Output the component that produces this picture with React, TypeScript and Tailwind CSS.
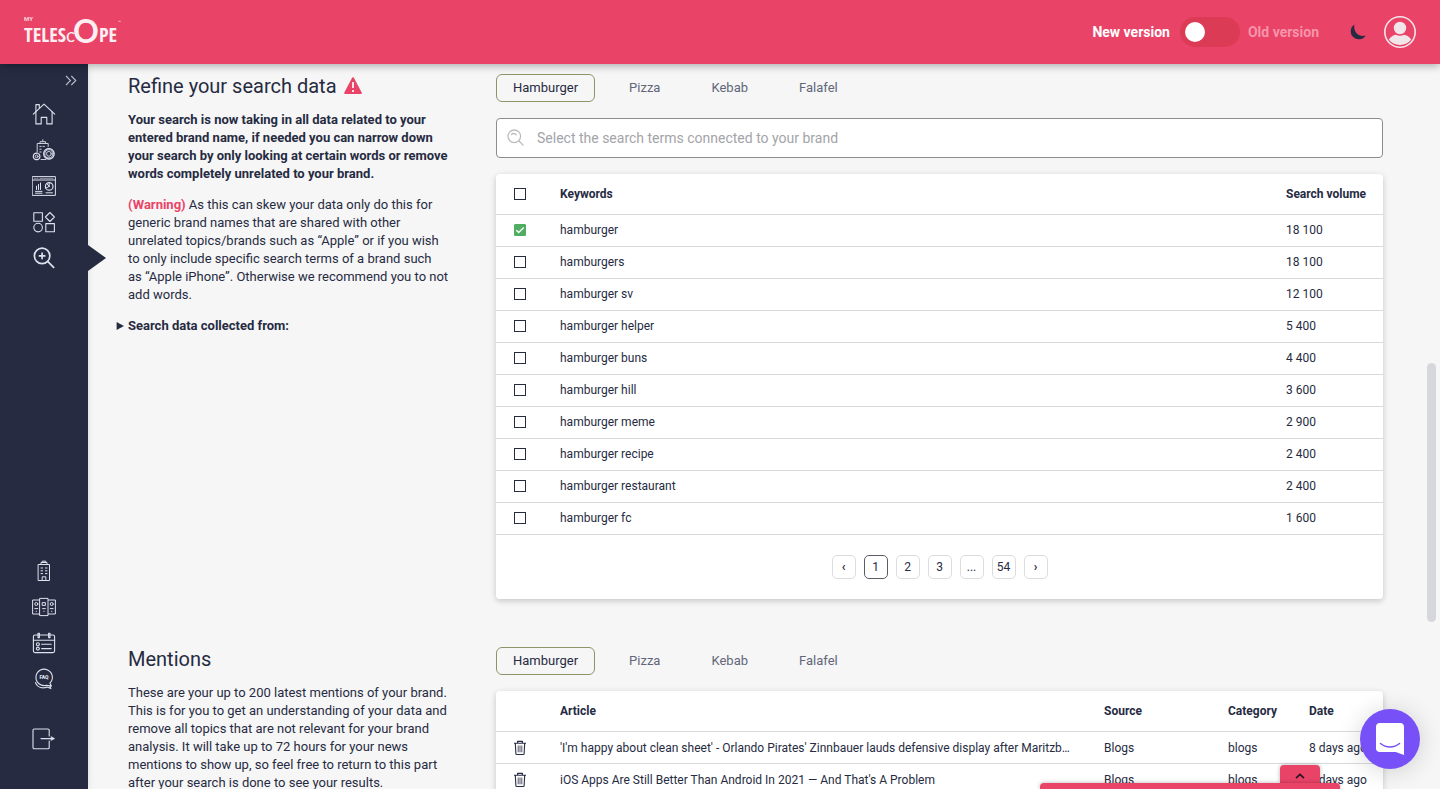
import React from "react";

const keywords = [
  { term: "hamburger", volume: "18 100", selected: true },
  { term: "hamburgers", volume: "18 100" },
  { term: "hamburger sv", volume: "12 100" },
  { term: "hamburger helper", volume: "5 400" },
  { term: "hamburger buns", volume: "4 400" },
  { term: "hamburger hill", volume: "3 600" },
  { term: "hamburger meme", volume: "2 900" },
  { term: "hamburger recipe", volume: "2 400" },
  { term: "hamburger restaurant", volume: "2 400" },
  { term: "hamburger fc", volume: "1 600" },
];

const mentions = [
  {
    article: "'I'm happy about clean sheet' - Orlando Pirates' Zinnbauer lauds defensive display after Maritzb…",
    source: "Blogs",
    category: "blogs",
    date: "8 days ago",
  },
  {
    article: "iOS Apps Are Still Better Than Android In 2021 — And That's A Problem",
    source: "Blogs",
    category: "blogs",
    date: "8 days ago",
  },
];

const brands = ["Hamburger", "Pizza", "Kebab", "Falafel"];

function Icon({ children, width = 1 }: { children: React.ReactNode; width?: number }) {
  return (
    <svg
      viewBox="0 0 24 24"
      className="size-6"
      fill="none"
      stroke="currentColor"
      strokeWidth={width}
      strokeLinecap="round"
      strokeLinejoin="round"
      aria-hidden="true"
    >
      {children}
    </svg>
  );
}

const HomeIcon = () => (
  <Icon width={1.1}>
    <path d="M1.3 12.2 12 2.2l10.7 10" />
    <path d="M3.9 9.8v12.1h5.3v-6.5h5.6v6.5h5.3V9.8" />
    <path d="M3.9 9.4V2.6h3.4v3.6" />
  </Icon>
);

const BrandSettingsIcon = () => (
  <Icon width={0.9}>
    <path d="M5.2 14V5.5h11v3M8 5.3V3.7h5.6v1.6M10.8 3.5V1.7" />
    <path d="M7.8 8.4h1.4M11 8.4h1.4M7.8 11.2h1.4M7.8 14h1.4M9 21.5h5" />
    <circle cx="16.9" cy="15.8" r="5.2" strokeWidth="1.3" strokeDasharray="2.7 .55" />
    <circle cx="16.9" cy="15.8" r="4.1" />
    <circle cx="16.9" cy="15.8" r="2.4" />
    <circle cx="4.6" cy="18.4" r="3.3" strokeWidth="1.2" strokeDasharray="1.8 .5" />
    <circle cx="4.6" cy="18.4" r="1.4" />
  </Icon>
);

const DashboardIcon = () => (
  <Icon>
    <path d="M.6 2.6h22.8v18.8H.6zM.6 6h22.8" />
    <path d="M2.5 4.3h1M5 4.3h1M8 4.3h13" strokeWidth=".6" />
    <path d="M4.5 15.5v-3.3M6.5 15.5v-5M8.5 15.5V9M3.5 17.4h6.5M3.5 19.2h6.5M14 18.8h6.5" />
    <circle cx="17.2" cy="12.4" r="3.8" strokeWidth="1.2" />
    <path d="M17.2 12.4 14.8 9.6M17.2 12.4l-3.4 1.8M17.2 12.4V9.2" />
  </Icon>
);

const ShapesIcon = () => (
  <Icon width={1.1}>
    <path d="M1.8 2.8h8.6v8.4H1.8zM13.8 13.6h8.6v8.2h-8.6z" />
    <path d="m17.9 2.5 4.5 4.5-4.5 4.5L13.4 7z" />
    <circle cx="6.1" cy="17.6" r="4.3" />
  </Icon>
);

const SearchPlusIcon = () => (
  <Icon width={1.7}>
    <circle cx="10.1" cy="9.9" r="7.7" />
    <path d="m15.9 15.7 5.7 5.7M10.1 7.2v5.4M7.4 9.9h5.4" />
  </Icon>
);

const OfficeIcon = () => (
  <Icon width={1}>
    <path d="M6.5 5.5h11v16h-11zM9 5.3V3.5h6v1.8M10.2 3.3V2.2h3.6v1.1" />
    <path d="M9 9h1.6M13.4 9H15M9 11.8h1.6M13.4 11.8H15M9 14.6h1.6M13.4 14.6H15M10.2 21.4v-3.6h3.6v3.6" />
  </Icon>
);

const BuildingsIcon = () => (
  <Icon width={1}>
    <path d="M8 3.4h8v17.2H8zM7.7 5H.6v14h7.1M16.3 5h7.1v14h-7.1" />
    <circle cx="4.3" cy="9" r="1.5" />
    <path d="M10.6 7.6h2.8v2.8h-2.8z" />
    <circle cx="19.7" cy="9" r="1.5" />
    <path d="M2.8 13.6h3M10.6 13.6h2.8M18.2 13.6h3M4.3 16.2v.3M12 16.2v.3M19.7 16.2v.3" />
  </Icon>
);

const CalendarIcon = () => (
  <Icon width={1.1}>
    <rect x="1.4" y="4" width="21.2" height="17.6" rx="1.6" />
    <path d="M1.4 9.2h21.2M6 2.2h1.4v4.4H6zM16.6 2.2H18v4.4h-1.4z" />
    <circle cx="5.9" cy="13.3" r="1.5" />
    <circle cx="5.9" cy="17.6" r="1.5" />
    <path d="M9.6 13.3h9.6M9.6 17.6h9.6" />
  </Icon>
);

const FaqIcon = () => (
  <Icon width={1.1}>
    <path d="M17.9 16.2a8.2 8.2 0 1 0-3.4 2l4.9.9z" />
    <path d="M3.500 15.500c1 3.500 4.500 5.600 8.300 5.300 1.200 0 2.300-.4 3.200-.9l3.900 1.700-1-2.400" />
    <text
      x="12"
      y="12.3"
      textAnchor="middle"
      fill="currentColor"
      strokeWidth="0"
      fontSize="5"
      fontWeight="900"
      fontFamily="Roboto, sans-serif"
    >
      FAQ
    </text>
  </Icon>
);

const LogoutIcon = () => (
  <Icon width={1.1}>
    <path d="M17.2 9V3.3c0-.8-.5-1.3-1.3-1.3H2.3C1.5 2 1 2.500 1 3.300v17.200c0 .8.5 1.300 1.300 1.300h13.600c.8 0 1.300-.5 1.300-1.300V14" />
    <path d="M9 11.600h12" />
    <path d="m19.200 9.600 3.600 2-3.600 2z" fill="currentColor" strokeWidth=".4" />
  </Icon>
);

const TrashIcon = () => (
  <svg viewBox="0 0 14 16" className="h-4 w-3.5" fill="none" stroke="currentColor" strokeWidth="1.1" aria-hidden="true">
    <path d="M1 3.300h12M4.600 3V1.400h4.800V3M2.300 3.500l.6 10.200c0 .5.4.8.9.8h6.400c.5 0 .9-.3.9-.8l.6-10.200" />
    <path d="M5.200 5.500v6.800M7 5.500v6.800M8.800 5.500v6.800" strokeWidth=".8" />
  </svg>
);

function Logo() {
  return (
    <svg viewBox="0 0 104 32" className="h-8 w-[104px] overflow-visible" fill="#fdeef2" role="img" aria-label="My Telescope">
      <text x="0" y="5" fontSize="6" fontWeight="700" fontFamily="Roboto, sans-serif" opacity=".85">MY</text>
      <text x="0" y="26" fontSize="20" fontFamily="'Liberation Sans Narrow', 'Open Sans Condensed', Roboto, sans-serif">TELES</text>
      <text x="42" y="26" fontSize="19" fontFamily="Lato, sans-serif">c</text>
      <text x="49" y="27" fontSize="32" fontWeight="700" fontFamily="Lato, sans-serif">O</text>
      <text x="75" y="26" fontSize="20" fontFamily="'Liberation Sans Narrow', 'Open Sans Condensed', Roboto, sans-serif">PE</text>
      <text x="94" y="8" fontSize="5" fontFamily="Roboto, sans-serif">™</text>
    </svg>
  );
}

function Header() {
  return (
    <header className="relative z-20 flex h-16 shrink-0 items-center justify-between bg-[#ea4368] px-6 shadow-[0_2px_8px_rgba(0,0,0,0.3)]">
      <a href="#home" className="block">
        <Logo />
      </a>
      <div className="flex items-center">
        <label className="flex cursor-pointer items-center text-sm font-bold text-white">
          New version
          <input type="checkbox" role="switch" className="peer sr-only" />
          <span className="mr-2 ml-2.5 flex h-[30px] w-[60px] items-center rounded-full bg-[#db3b55] px-[5px]">
            <span className="size-5 rounded-full bg-white" />
          </span>
          <span className="text-[#f694ab]">Old version</span>
        </label>
        <button type="button" aria-label="Dark mode" className="ml-[31px] text-[#262b42]">
          <svg viewBox="0 0 16 16" className="size-4" fill="currentColor" aria-hidden="true">
            <path d="M4.400.6A8 8 0 1 0 15.600 11.400C9.600 13.600 3 8.200 4.400.6z" />
          </svg>
        </button>
        <button type="button" aria-label="Account" className="ml-[18px] text-[#f1e6ea]">
          <svg viewBox="0 0 32 32" className="size-8" aria-hidden="true">
            <circle cx="16" cy="16" r="15.200" fill="none" stroke="currentColor" strokeWidth="1.600" />
            <circle cx="16" cy="12" r="6.200" fill="currentColor" />
            <path d="M4.800 23.600C7 20.200 10 18.900 12 18.800c2.400 1.200 5.600 1.200 8 0 2.200.2 5.200 1.600 7.200 4.800C24.800 27 20.800 29 16 29S7.200 27 4.800 23.600z" fill="currentColor" />
          </svg>
        </button>
      </div>
    </header>
  );
}

function NavItem({ label, active, children }: { label: string; active?: boolean; children: React.ReactNode }) {
  return (
    <a href={"#" + label.toLowerCase().replace(/ /g, "-")} aria-label={label} className="relative flex h-9 items-center justify-center">
      {children}
      {active && (
        <svg viewBox="0 0 18 26" className="absolute top-[5px] left-full h-[26px] w-[18px] text-[#262b42]" aria-hidden="true">
          <path d="M0 0 18 13 0 26z" fill="currentColor" />
        </svg>
      )}
    </a>
  );
}

function Sidebar() {
  return (
    <nav aria-label="Main" className="relative z-10 flex w-22 shrink-0 flex-col bg-[#262b42] pb-8 text-[#dfe1ec] shadow-[0_0_6px_rgba(0,0,0,0.12)]">
      <button type="button" aria-label="Expand menu" className="flex h-8 items-center justify-end pr-[11px]">
        <svg viewBox="0 0 12 12" className="size-3" fill="none" stroke="#b9bccb" strokeWidth="1.1" aria-hidden="true">
          <path d="m1 2 4.500 4.500L1 11M6.300 2l4.500 4.500-4.500 4.500" />
        </svg>
      </button>
      <NavItem label="Home"><HomeIcon /></NavItem>
      <NavItem label="Brand settings"><BrandSettingsIcon /></NavItem>
      <NavItem label="Dashboard"><DashboardIcon /></NavItem>
      <NavItem label="Categories"><ShapesIcon /></NavItem>
      <NavItem label="Search" active><SearchPlusIcon /></NavItem>
      <div className="flex-1" />
      <NavItem label="Company"><OfficeIcon /></NavItem>
      <NavItem label="Competitors"><BuildingsIcon /></NavItem>
      <NavItem label="Calendar"><CalendarIcon /></NavItem>
      <NavItem label="Questions"><FaqIcon /></NavItem>
      <div className="h-6" />
      <NavItem label="Log out"><LogoutIcon /></NavItem>
    </nav>
  );
}

function BrandTabs() {
  return (
    <div role="tablist" className="mb-4 flex gap-[17px]">
      {brands.map((brand, i) => (
        <button
          key={brand}
          type="button"
          role="tab"
          aria-selected={i === 0}
          className={
            i === 0
              ? "h-7 rounded-md border border-[#8a9668] px-4 text-[13px] text-[#262b42]"
              : "h-7 rounded-md border border-transparent px-4 text-[13px] text-[#62667a]"
          }
        >
          {brand}
        </button>
      ))}
    </div>
  );
}

function Checkbox({ label, checked }: { label: string; checked?: boolean }) {
  return (
    <span className="relative flex size-3">
      <input
        type="checkbox"
        aria-label={label}
        defaultChecked={checked}
        className="peer size-3 appearance-none border-[1px] border-[#262b42] bg-white outline-[#262b42] checked:rounded-[1px] checked:border-[#4fae61] checked:bg-[#4fae61]"
      />
      <svg viewBox="0 0 12 12" className="pointer-events-none absolute inset-0 hidden size-3 peer-checked:block" fill="none" stroke="#fff" strokeWidth="1.4" aria-hidden="true">
        <path d="m2.300 6.200 2.400 2.400 5-5.200" />
      </svg>
    </span>
  );
}

function KeywordsCard() {
  return (
    <div className="rounded bg-white shadow-[0_2px_6px_rgba(0,0,0,0.2)]">
      <table className="w-full table-fixed border-collapse text-left text-xs">
        <thead>
          <tr className="h-10 border-b border-[#d9dadd]">
            <th className="w-16 pl-[18px]"><Checkbox label="Select all keywords" /></th>
            <th className="font-bold">Keywords</th>
            <th className="w-[97px] font-bold">Search volume</th>
          </tr>
        </thead>
        <tbody>
          {keywords.map((k) => (
            <tr key={k.term} className="h-8 border-b border-[#d9dadd]">
              <td className="pl-[18px]"><Checkbox label={k.term} checked={k.selected} /></td>
              <td>{k.term}</td>
              <td>{k.volume}</td>
            </tr>
          ))}
        </tbody>
      </table>
      <div className="flex justify-center gap-2 py-5">
        {["‹", "1", "2", "3", "...", "54", "›"].map((p) => (
          <button
            key={p}
            type="button"
            className={
              p === "1"
                ? "flex size-6 items-center justify-center rounded-[5px] border border-[#5b5d66] text-xs"
                : p === "‹" || p === "›"
                  ? "flex size-6 items-center justify-center rounded-[5px] border border-[#dcdcdf] text-xs font-bold"
                  : "flex size-6 items-center justify-center rounded-[5px] border border-[#dcdcdf] text-xs"
            }
          >
            {p}
          </button>
        ))}
      </div>
    </div>
  );
}

function MentionsCard() {
  return (
    <div className="rounded bg-white shadow-[0_2px_6px_rgba(0,0,0,0.2)]">
      <table className="w-full table-fixed border-collapse text-left text-xs">
        <thead>
          <tr className="h-[41px] border-b border-[#d9dadd]">
            <th className="w-16" />
            <th className="font-bold">Article</th>
            <th className="w-[124px] font-bold">Source</th>
            <th className="w-[81px] font-bold">Category</th>
            <th className="w-[74px] font-bold">Date</th>
          </tr>
        </thead>
        <tbody>
          {mentions.map((m) => (
            <tr key={m.article} className="h-8 border-b border-[#d9dadd]">
              <td className="pl-[17px]">
                <button type="button" aria-label="Delete mention" className="block"><TrashIcon /></button>
              </td>
              <td className="pr-6"><div className="truncate">{m.article}</div></td>
              <td>{m.source}</td>
              <td>{m.category}</td>
              <td>{m.date}</td>
            </tr>
          ))}
        </tbody>
      </table>
    </div>
  );
}

export default function App() {
  return (
    <div className="flex h-screen flex-col overflow-hidden bg-[#f6f6f6] font-[Roboto,sans-serif] text-[#262b42]">
      <Header />
      <div className="flex min-h-0 flex-1">
        <Sidebar />
        <main className="relative min-w-0 flex-1 overflow-hidden pt-2.5 pr-[57px] pl-10">
          <section className="mb-12 flex gap-11">
            <div className="w-81 shrink-0 text-[13px] leading-[18px]">
              <h2 className="mb-[13px] flex items-center gap-[7px] text-xl leading-6">
                Refine your search data
                <svg viewBox="0 0 18 18" className="size-[18px]" aria-hidden="true">
                  <path d="M9 1.200 16.800 16H1.200z" fill="#ea4368" stroke="#ea4368" strokeWidth="2" strokeLinejoin="round" />
                  <path d="M9 5v6M9 13v2" stroke="#fff" strokeWidth="1.7" />
                </svg>
              </h2>
              <p className="mb-[13px] font-bold">
                Your search is now taking in all data related to your entered brand name, if needed you can narrow down
                your search by only looking at certain words or remove words completely unrelated to your brand.
              </p>
              <p className="mb-[13px]">
                <strong className="font-bold text-[#ea4368]">(Warning)</strong> As this can skew your data only do this
                for generic brand names that are shared with other unrelated topics/brands such as “Apple” or if you
                wish to only include specific search terms of a brand such as&nbsp;“Apple iPhone”. Otherwise we recommend
                you to not add words.
              </p>
              <details>
                <summary className="-ml-3 flex cursor-pointer list-none items-center gap-1 font-bold">
                  <svg viewBox="0 0 8 8" className="size-2" fill="currentColor" aria-hidden="true">
                    <path d="M.6 0 8 4 .6 8z" />
                  </svg>
                  Search data collected from:
                </summary>
              </details>
            </div>
            <div className="min-w-0 flex-1">
              <BrandTabs />
              <label className="mb-4 flex h-10 items-center gap-3 rounded border border-[#8b8d91] bg-white px-2.5">
                <svg viewBox="0 0 18 18" className="size-[18px] shrink-0" fill="none" stroke="#bdbdc0" strokeWidth="1.3" strokeLinecap="round" aria-hidden="true">
                  <circle cx="7.3" cy="7.3" r="6.3" />
                  <path d="m12 12 4 4M4.300 5.600c1.400-1.500 3.800-1.500 5 .2" />
                </svg>
                <input
                  type="text"
                  aria-label="Search terms"
                  placeholder="Select the search terms connected to your brand"
                  className="min-w-0 flex-1 bg-transparent text-sm outline-none placeholder:text-[#a3a4a9]"
                />
              </label>
              <KeywordsCard />
            </div>
          </section>
          <section className="flex gap-11">
            <div className="w-81 shrink-0 text-[13px] leading-[18px]">
              <h2 className="mb-[13px] text-xl leading-6">Mentions</h2>
              <p>
                These are your up to 200 latest mentions of your brand. This is for you to get an understanding of your
                data and remove all topics that are not relevant for your brand analysis. It will take up to 72 hours
                for your news mentions to show up, so feel free to return to this part after your search is done to see
                your results.
              </p>
            </div>
            <div className="min-w-0 flex-1">
              <BrandTabs />
              <MentionsCard />
            </div>
          </section>
          <div className="absolute top-[299px] right-1 h-[259px] w-[9px] rounded-full bg-[#d5d7da]" />
        </main>
      </div>
      <div className="fixed right-[100px] bottom-0 z-20 flex w-[300px] flex-col items-end">
        <button type="button" aria-label="Show panel" className="mr-5 flex h-[18px] w-10 items-center justify-center rounded-t bg-[#ea4368] pt-1 shadow-[0_0_4px_rgba(0,0,0,0.3)]">
          <svg viewBox="0 0 10 6" className="h-1.5 w-2.5" fill="none" stroke="#2b1420" strokeWidth="1.8" aria-hidden="true">
            <path d="M1 5.200 5 1.400l4 3.800" />
          </svg>
        </button>
        <div className="h-1.5 w-full rounded-t bg-[#ea4368] shadow-[0_0_4px_rgba(0,0,0,0.3)]" />
      </div>
      <button type="button" aria-label="Open chat" className="fixed right-5 bottom-5 z-30 flex size-15 items-center justify-center rounded-full bg-[#7850f8] shadow-[0_2px_24px_rgba(0,0,0,0.16)]">
        <svg viewBox="0 0 28 32" className="h-8 w-7" aria-hidden="true">
          <path d="M28 32s-4.700-1.900-8.300-3H3.500C1.600 29 0 27.500 0 25.500V3.500C0 1.600 1.600 0 3.500 0h21C26.400 0 28 1.600 28 3.500z" fill="#fff" />
          <path d="M4.500 20.500c5.500 4.600 13.500 4.600 19 0" fill="none" stroke="#7850f8" strokeWidth="1.6" strokeLinecap="round" />
        </svg>
      </button>
    </div>
  );
}
